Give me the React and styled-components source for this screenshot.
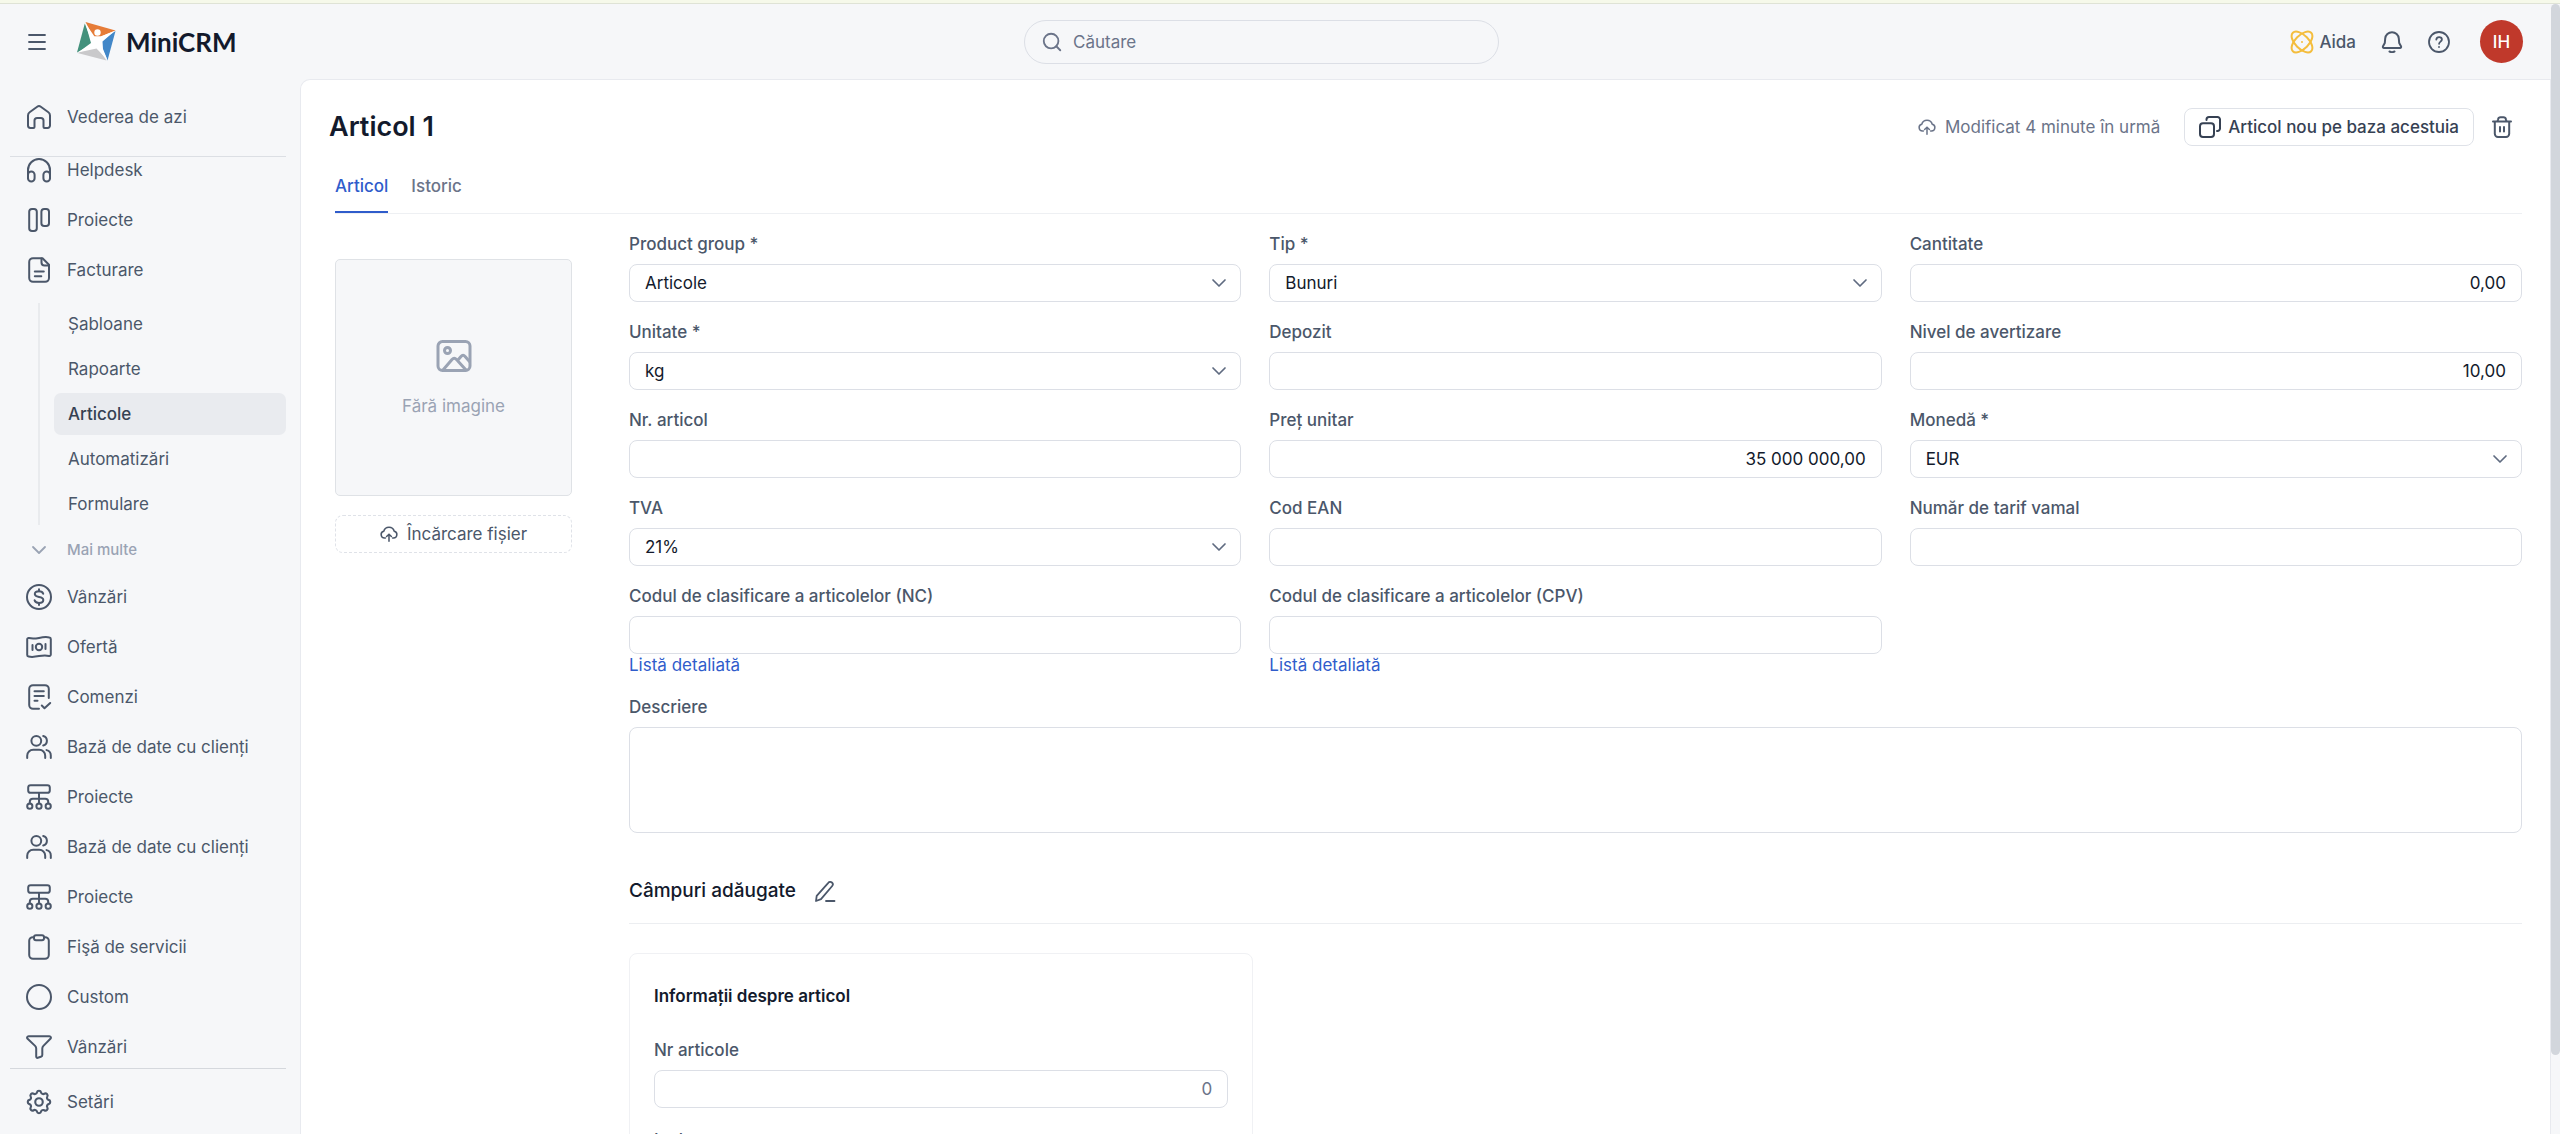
import React from "react"
import styled, { createGlobalStyle, css } from "styled-components"
import { ChevronDown, Menu, Search } from "lucide-react"
import { TbSettings } from "react-icons/tb"

const GlobalStyle = createGlobalStyle`
  * {
    box-sizing: border-box;
  }
  body {
    margin: 0;
    background: #f6f7f9;
    color: #4b576a;
    font-family: Inter, "Liberation Sans", sans-serif;
    font-size: 17px;
    line-height: 24px;
    overflow: hidden;
  }
  button, input, select, textarea {
    font: inherit;
    color: inherit;
  }
  h1, h2, h3 {
    margin: 0;
  }
  a {
    text-decoration: none;
  }
  svg {
    flex-shrink: 0;
  }
`

/* ---------- icons ---------- */

const Icon = ({ size = 26, box = 26, stroke = 2, children }) => (
  <svg
    width={size}
    height={size}
    viewBox={`0 0 ${box} ${box}`}
    fill="none"
    stroke="currentColor"
    strokeWidth={stroke}
    strokeLinecap="round"
    strokeLinejoin="round"
    aria-hidden="true"
  >
    {children}
  </svg>
)

const HomeIcon = () => (
  <Icon>
    <path d="M2 11.4c0-1.3.6-2.4 1.6-3.1l7.6-5.6c1.1-.8 2.5-.8 3.6 0l7.6 5.6c1 .7 1.6 1.8 1.6 3.1v10.2A2.4 2.4 0 0 1 21.6 24h-3.1a1 1 0 0 1-1-1v-6.5a2.6 2.6 0 0 0-2.6-2.6h-3.8a2.6 2.6 0 0 0-2.6 2.6V23a1 1 0 0 1-1 1H4.4A2.4 2.4 0 0 1 2 21.6z" />
  </Icon>
)

const HeadphonesIcon = () => (
  <Icon>
    <path d="M2 21v-8a11 11 0 0 1 22 0v8" />
    <rect x="2" y="14.5" width="6.6" height="10" rx="3.3" />
    <rect x="17.4" y="14.5" width="6.6" height="10" rx="3.3" />
  </Icon>
)

const BoardIcon = () => (
  <Icon>
    <rect x="3.2" y="2" width="7.6" height="22" rx="2.8" />
    <rect x="15.4" y="2" width="7.6" height="17" rx="2.8" />
  </Icon>
)

const FileIcon = () => (
  <Icon>
    <path d="M7 1.2h9.5L23 7.7V21a3.8 3.8 0 0 1-3.8 3.8H7A3.8 3.8 0 0 1 3.2 21V5A3.8 3.8 0 0 1 7 1.2z" />
    <path d="M15.5 1.5v4a3 3 0 0 0 3 3h4.2" />
    <path d="M8.8 14.5h9M8.8 19.3h6.5" />
  </Icon>
)

const DollarIcon = () => (
  <Icon>
    <circle cx="13" cy="13" r="12" />
    <path d="M17.2 9.7C16.7 8 15.2 7.2 13 7.2c-2.4 0-4.2 1-4.2 2.9 0 2 1.9 2.5 4.2 2.9s4.3 1 4.3 3-1.9 2.9-4.3 2.9c-2.3 0-4-.9-4.4-2.6" />
    <path d="M13 5.2v2M13 18.9v2" />
  </Icon>
)

const BanknoteIcon = () => (
  <Icon>
    <path d="M1.2 5.4c0-1 .8-1.5 1.7-1.3 4 .9 7.2.4 10.1-.2 3.4-.7 7-1.1 10.4-.5.9.1 1.4.7 1.4 1.5v15.700c0 1-.8 1.500-1.700 1.300-4-.9-7.200-.4-10.100.2-3.400.7-7 1.100-10.400.5-.9-.1-1.400-.7-1.400-1.500z" />
    <circle cx="13" cy="13" r="3.2" />
    <path d="M6.5 11v5M19.5 10v5" />
  </Icon>
)

const OrderIcon = () => (
  <Icon>
    <path d="M13 24.8H7A3.8 3.8 0 0 1 3.2 21V5A3.8 3.8 0 0 1 7 1.2h12A3.8 3.8 0 0 1 22.8 5v9" />
    <path d="M8.5 7.2h9.3M8.5 12h9.3M8.5 16.8h3M15.8 21.5l2.7 2.7 5.7-5.2" />
  </Icon>
)

const UsersIcon = () => (
  <Icon>
    <circle cx="10.3" cy="6.8" r="4.9" />
    <path d="M17.2 2a4.9 4.9 0 0 1 0 9.5" />
    <path d="M1.2 24v-2.2a6 6 0 0 1 6-6h6a6 6 0 0 1 6 6V24" />
    <path d="M20.5 16.1a5.6 5.6 0 0 1 4.3 5.5V24" />
  </Icon>
)

const NetworkIcon = () => (
  <Icon>
    <rect x="2.2" y="1.2" width="21.6" height="7.6" rx="2.4" />
    <path d="M13 9v10.5M3.8 19.5v-1.7a3 3 0 0 1 3-3h12.4a3 3 0 0 1 3 3v1.7" />
    <circle cx="3.8" cy="22.2" r="2.6" />
    <circle cx="13" cy="22.2" r="2.6" />
    <circle cx="22.2" cy="22.2" r="2.6" />
  </Icon>
)

const ClipboardIcon = () => (
  <Icon>
    <path d="M8 3.2H6.8A3.6 3.6 0 0 0 3.2 6.8V21A3.8 3.8 0 0 0 7 24.8h12a3.8 3.8 0 0 0 3.8-3.8V6.8a3.6 3.6 0 0 0-3.6-3.6H18" />
    <rect x="8" y="1.2" width="10" height="5" rx="2" />
  </Icon>
)

const CircleIcon = () => (
  <Icon>
    <circle cx="13" cy="13" r="12" />
  </Icon>
)

const FunnelIcon = () => (
  <Icon>
    <path d="M2.6 2.2h20.8c1.4 0 2 1.5 1 2.5l-7 7.2a3.8 3.8 0 0 0-1.1 2.7v6.3c0 .9-.5 1.6-1.4 1.9l-3.1 1c-.9.3-1.6-.3-1.6-1.2v-8a3.8 3.8 0 0 0-1.1-2.7l-7.5-7.2c-1-1-.4-2.5 1-2.5z" />
  </Icon>
)

const GearIcon = () => <TbSettings size={30} strokeWidth={1.7} />

const CloudUpIcon = ({ size }) => (
  <Icon size={size} box={20} stroke={1.7}>
    <path d="M6 14.5H5a3.8 3.8 0 0 1-.8-7.5 6 6 0 0 1 11.6 0 3.8 3.8 0 0 1-.8 7.5h-1" />
    <path d="M10 18V10.5M7.3 12.8 10 10.2l2.7 2.6" />
  </Icon>
)

const DuplicateIcon = () => (
  <Icon size={22} box={22}>
    <rect x="1" y="7.2" width="14" height="13.8" rx="3" />
    <path d="M7.5 4V3.5A2.5 2.5 0 0 1 10 1h8.5A2.5 2.5 0 0 1 21 3.5v9a2.5 2.5 0 0 1-2.5 2.5H18" />
  </Icon>
)

const TrashIcon = () => (
  <Icon size={22} box={22}>
    <path d="M2 5.5h18M6.5 5.2l.6-2A2.5 2.5 0 0 1 9.5 1.2h3a2.5 2.5 0 0 1 2.4 2l.6 2M3.8 5.8v12a3.2 3.2 0 0 0 3.2 3.2h8a3.2 3.2 0 0 0 3.2-3.2v-12M9 11v4.5M13 11v4.5" />
  </Icon>
)

const BellIcon = () => (
  <Icon size={22} box={22}>
    <path d="M11 1.2a6.8 6.8 0 0 0-6.8 6.3L3.8 12 2 15.3c-.5 1 .1 1.7 1 1.7h16c.9 0 1.5-.7 1-1.7L18.2 12l-.4-4.5A6.8 6.8 0 0 0 11 1.2z" />
    <path d="M8.5 20.5c1.5.8 3.5.8 5 0" />
  </Icon>
)

const HelpIcon = () => (
  <Icon size={22} box={22} stroke={1.8}>
    <circle cx="11" cy="11" r="10" />
    <path d="M8.3 8.6c.2-1.5 1.3-2.4 2.8-2.4 1.6 0 2.8 1 2.8 2.4 0 1.9-2.7 2.2-2.8 4.2M11 15.9v.1" />
  </Icon>
)

const PencilIcon = () => (
  <Icon size={22} box={22} stroke={1.8}>
    <path d="M14.3 2.8a2.5 2.5 0 0 1 3.6-.3 2.5 2.5 0 0 1 .3 3.5L7 19.2 2 21l.7-5.2zM12 21h8.5" />
  </Icon>
)

const ImageIcon = () => (
  <Icon size={36} box={36} stroke={3}>
    <rect x="2" y="3.5" width="32" height="29" rx="4.5" />
    <circle cx="11.5" cy="12.5" r="3" />
    <path d="M7 32l9-10.5c1.5-1.6 3-1.6 4.5 0L30 32M21.5 22.5l3.5-4c1.3-1.5 2.8-1.5 4.1-.1l4.4 5" />
  </Icon>
)

const AidaIcon = () => (
  <svg width="24" height="24" viewBox="0 0 24 24" fill="none" stroke="#f4bd3d" strokeWidth="2" aria-hidden="true">
    <ellipse cx="12" cy="12" rx="13" ry="6.8" transform="rotate(45 12 12)" />
    <ellipse cx="12" cy="12" rx="13" ry="6.8" transform="rotate(-45 12 12)" />
    <circle cx="12" cy="12" r="1" fill="#f4bd3d" stroke="none" />
  </svg>
)

const LogoMark = () => (
  <svg width="39" height="39" viewBox="0 0 39 39" aria-hidden="true">
    <path d="M8.5 0 38.5 8.5 24 14.5 16 14.5z" fill="#e67c38" />
    <path d="M7.8 1.5 13.5 16 14.5 22.5 0 30.5z" fill="#43917c" />
    <path d="M38.5 9 24.5 18.5 25 26 30.5 38.5z" fill="#4287c8" />
    <path d="M.5 31 16 24.5 19.5 24 29.5 38.5z" fill="#c9c9cb" />
    <path d="M8.5 1.5 17.5 14.5 23.5 14.5 38 8.8 25.5 19.5 26 27 30.5 38 19.5 26.5 1 30.5 14 21z" fill="#fff" />
    <circle cx="20.5" cy="10.5" r="3.2" fill="#fff" />
  </svg>
)

/* ---------- shell ---------- */

const Page = styled.div`
  height: 100vh;
  display: flex;
  flex-direction: column;
  border-top: 3px solid #f6f9ea;
`

const Body = styled.div`
  flex: 1;
  min-height: 0;
  display: flex;
  border-top: 1px solid #dfe3d6;
`

const AppArea = styled.div`
  flex: 1;
  min-width: 0;
  display: flex;
  flex-direction: column;
`

const ScrollTrack = styled.div`
  width: 9px;
`

const ScrollThumb = styled.div`
  height: 93%;
  border-radius: 5px;
  background: #d2d6dc;
`

const Header = styled.header`
  height: 75px;
  padding-right: 28px;
  display: grid;
  grid-template-columns: 1fr 475px 1fr;
  align-items: center;
`

const Brand = styled.div`
  display: flex;
  align-items: center;
  padding-left: 25px;
`

const BrandLink = styled.a`
  display: flex;
  align-items: center;
  gap: 10px;
  margin-left: 28px;
  color: #131a2c;
  font-family: Lato, sans-serif;
  font-size: 26px;
  font-weight: 700;
`

const IconButton = styled.button`
  display: flex;
  align-items: center;
  gap: 5px;
  padding: 0;
  border: 0;
  background: none;
  font-weight: 500;
`

const SearchBox = styled.label`
  height: 44px;
  display: flex;
  align-items: center;
  gap: 10px;
  padding: 0 16px;
  border: 1px solid #dcdfe6;
  border-radius: 22px;
  color: #6b7489;
`

const SearchInput = styled.input`
  flex: 1;
  min-width: 0;
  padding: 0;
  border: 0;
  outline: 0;
  background: none;
  &::placeholder {
    color: #6b7489;
    opacity: 1;
  }
`

const HeaderTools = styled.div`
  display: flex;
  justify-content: flex-end;
  align-items: center;
  gap: 25px;
`

const Avatar = styled.button`
  width: 43px;
  height: 43px;
  margin-left: 5px;
  padding: 0;
  border: 0;
  border-radius: 50%;
  background: #c0392b;
  color: #fff;
  font-weight: 500;
`

const Columns = styled.div`
  flex: 1;
  min-height: 0;
  display: flex;
`

/* ---------- sidebar ---------- */

const Sidebar = styled.nav`
  width: 300px;
  padding: 0 14px 0 10px;
  display: flex;
  flex-direction: column;
`

const NavTop = styled.div`
  padding: 13px 0 14px;
  border-bottom: 1px solid #dcdfe4;
`

const NavScroll = styled.div`
  flex: 1;
  min-height: 0;
  overflow: hidden;
`

const NavList = styled.div`
  margin-top: -12px;
`

const NavBottom = styled.div`
  padding: 8px 0 7px;
  border-top: 1px solid #d5d8dd;
`

const NavLink = styled.a`
  height: 50px;
  display: flex;
  align-items: center;
  gap: 15px;
  padding-left: 16px;
  color: #4b576a;
`

const NavIcon = styled.span`
  width: 26px;
  display: flex;
  justify-content: center;
`

const SubNav = styled.div`
  margin: 8px 0 0 28px;
  padding-left: 14px;
  border-left: 2px solid #e9ebee;
`

const SubLink = styled.a`
  height: 42px;
  margin-bottom: 3px;
  display: flex;
  align-items: center;
  padding-left: 14px;
  border-radius: 7px;
  color: #4b576a;
  ${({ $active }) =>
    $active &&
    css`
      background: #e9ebef;
      color: #364153;
      font-weight: 500;
    `}
`

const MoreButton = styled.button`
  height: 44px;
  display: flex;
  align-items: center;
  gap: 16px;
  padding: 0 0 0 17px;
  border: 0;
  background: none;
  color: #9aa3b4;
  font-size: 15px;
  font-weight: 500;
`

/* ---------- article ---------- */

const Main = styled.main`
  flex: 1;
  min-width: 0;
  padding: 24px 28px 0;
  border: 1px solid #e8eaef;
  border-width: 1px 1px 0 1px;
  border-radius: 10px 0 0 0;
  background: #fff;
  overflow: hidden;
`

const TitleRow = styled.div`
  display: flex;
  align-items: center;
  height: 46px;
`

const Title = styled.h1`
  flex: 1;
  color: #131a2c;
  font-size: 27px;
  font-weight: 600;
`

const SavedNote = styled.span`
  display: flex;
  align-items: center;
  gap: 9px;
  margin-right: 24px;
  color: #6b7489;
`

const CopyButton = styled.button`
  height: 38px;
  display: flex;
  align-items: center;
  gap: 7px;
  margin-right: 17px;
  padding: 0 14px;
  border: 1px solid #dfe2e8;
  border-radius: 8px;
  background: #fff;
  color: #364153;
  font-weight: 500;
`

const DeleteButton = styled(IconButton)`
  margin-right: 9px;
`

const Tabs = styled.div`
  display: flex;
  gap: 23px;
  margin-left: 6px;
  padding-top: 15px;
  border-bottom: 1px solid #eef0f3;
`

const Tab = styled.button`
  height: 48px;
  padding: 0 0 4px;
  border: 0;
  border-bottom: 2px solid ${({ $active }) => ($active ? "#2f5ccb" : "transparent")};
  background: none;
  color: ${({ $active }) => ($active ? "#2f5ccb" : "#6b7489")};
  font-weight: 500;
`

const Content = styled.div`
  display: flex;
  gap: 57px;
  margin-left: 6px;
  padding-top: 18px;
`

const MediaColumn = styled.div`
  width: 237px;
  flex-shrink: 0;
  padding-top: 27px;
`

const ImageBox = styled.div`
  aspect-ratio: 1;
  display: flex;
  flex-direction: column;
  align-items: center;
  justify-content: center;
  gap: 20px;
  border: 1px solid #dfe2e6;
  border-radius: 5px;
  background: #f6f7f9;
  color: #9aa3b4;
`

const UploadButton = styled.button`
  width: 100%;
  height: 38px;
  display: flex;
  align-items: center;
  justify-content: center;
  gap: 9px;
  margin-top: 19px;
  padding: 0;
  border: 1px dashed #dfe2e8;
  border-radius: 8px;
  background: #fff;
`

const FormColumn = styled.form`
  flex: 1;
  min-width: 0;
`

const FieldGrid = styled.div`
  display: grid;
  grid-template-columns: repeat(3, 1fr);
  gap: 18px 28px;
`

const FieldBox = styled.div`
  grid-column: ${({ $wide }) => ($wide ? "1 / -1" : "auto")};
  margin-bottom: ${({ $spaced }) => ($spaced ? "20px" : "0")};
`

const Label = styled.label`
  display: block;
  margin-bottom: 8px;
  font-weight: 500;
`

const control = css`
  display: block;
  width: 100%;
  padding: 0 15px;
  border: 1px solid #dcdfe6;
  border-radius: 8px;
  background: #fff;
  color: #131a2c;
`

const TextInput = styled.input`
  ${control}
  height: 38px;
  text-align: ${({ $numeric }) => ($numeric ? "right" : "left")};
  &::placeholder {
    color: #6b7489;
    opacity: 1;
  }
`

const TextArea = styled.textarea`
  ${control}
  height: 106px;
  resize: none;
`

const SelectWrap = styled.div`
  position: relative;
  svg {
    position: absolute;
    right: 10px;
    top: 7px;
    color: #5f6b80;
    pointer-events: none;
  }
`

const SelectInput = styled.select`
  ${control}
  height: 38px;
  appearance: none;
`

const FieldLink = styled.a`
  display: block;
  width: fit-content;
  color: #2f5ccb;
  line-height: 23px;
`

const SectionHead = styled.div`
  display: flex;
  align-items: center;
  gap: 18px;
  margin-top: 40px;
  padding: 6px 0 20px;
  border-bottom: 1px solid #eceef1;
`

const SectionTitle = styled.h2`
  color: #131a2c;
  font-size: 19px;
  font-weight: 500;
`

const Cards = styled.div`
  display: grid;
  grid-template-columns: repeat(3, 1fr);
  gap: 10px;
  margin-top: 29px;
`

const Card = styled.section`
  padding: 30px 24px;
  border: 1px solid #f0f1f4;
  border-radius: 8px;
`

const CardTitle = styled.h3`
  margin-bottom: 30px;
  color: #131a2c;
  font-size: 17px;
  font-weight: 600;
  line-height: 24px;
`

const projects = [
  { icon: HeadphonesIcon, label: "Helpdesk" },
  { icon: BoardIcon, label: "Proiecte" },
  { icon: FileIcon, label: "Facturare" },
]

const subItems = ["Șabloane", "Rapoarte", "Articole", "Automatizări", "Formulare"]

const modules = [
  { icon: DollarIcon, label: "Vânzări" },
  { icon: BanknoteIcon, label: "Ofertă" },
  { icon: OrderIcon, label: "Comenzi" },
  { icon: UsersIcon, label: "Bază de date cu clienți" },
  { icon: NetworkIcon, label: "Proiecte" },
  { icon: UsersIcon, label: "Bază de date cu clienți" },
  { icon: NetworkIcon, label: "Proiecte" },
  { icon: ClipboardIcon, label: "Fişă de servicii" },
  { icon: CircleIcon, label: "Custom" },
  { icon: FunnelIcon, label: "Vânzări" },
]

const fields = [
  { id: "group", label: "Product group *", type: "select", value: "Articole" },
  { id: "type", label: "Tip *", type: "select", value: "Bunuri" },
  { id: "quantity", label: "Cantitate", numeric: true, value: "0,00" },
  { id: "unit", label: "Unitate *", type: "select", value: "kg" },
  { id: "warehouse", label: "Depozit" },
  { id: "warning", label: "Nivel de avertizare", numeric: true, value: "10,00" },
  { id: "number", label: "Nr. articol" },
  { id: "price", label: "Preț unitar", numeric: true, value: "35 000 000,00" },
  { id: "currency", label: "Monedă *", type: "select", value: "EUR" },
  { id: "vat", label: "TVA", type: "select", value: "21%" },
  { id: "ean", label: "Cod EAN" },
  { id: "tariff", label: "Număr de tarif vamal" },
  { id: "nc", label: "Codul de clasificare a articolelor (NC)", link: "Listă detaliată" },
  { id: "cpv", label: "Codul de clasificare a articolelor (CPV)", link: "Listă detaliată" },
]

const Field = ({ id, label, type, value = "", numeric, placeholder, link, spaced }) => (
  <FieldBox $spaced={spaced}>
    <Label htmlFor={id}>{label}</Label>
    {type === "select" ? (
      <SelectWrap>
        <SelectInput id={id} defaultValue={value}>
          <option>{value}</option>
        </SelectInput>
        <ChevronDown size={24} strokeWidth={1.7} />
      </SelectWrap>
    ) : (
      <TextInput id={id} type="text" defaultValue={value} placeholder={placeholder} $numeric={numeric} />
    )}
    {link && <FieldLink href="#">{link}</FieldLink>}
  </FieldBox>
)

const NavItems = ({ items }) =>
  items.map(({ icon: ItemIcon, label }, i) => (
    <NavLink href="#" key={i}>
      <NavIcon>
        <ItemIcon />
      </NavIcon>
      {label}
    </NavLink>
  ))

const App = () => {
  return (
    <Page>
      <GlobalStyle />
      <Body>
        <AppArea>
          <Header>
            <Brand>
              <IconButton type="button" aria-label="Meniu">
                <Menu size={24} strokeWidth={1.8} />
              </IconButton>
              <BrandLink href="#">
                <LogoMark />
                MiniCRM
              </BrandLink>
            </Brand>
            <SearchBox>
              <Search size={22} strokeWidth={2} />
              <SearchInput type="search" placeholder="Căutare" aria-label="Căutare" />
            </SearchBox>
            <HeaderTools>
              <IconButton type="button">
                <AidaIcon />
                Aida
              </IconButton>
              <IconButton type="button" aria-label="Notificări">
                <BellIcon />
              </IconButton>
              <IconButton type="button" aria-label="Ajutor">
                <HelpIcon />
              </IconButton>
              <Avatar type="button">IH</Avatar>
            </HeaderTools>
          </Header>
          <Columns>
            <Sidebar>
              <NavTop>
                <NavItems items={[{ icon: HomeIcon, label: "Vederea de azi" }]} />
              </NavTop>
              <NavScroll>
                <NavList>
                  <NavItems items={projects} />
                  <SubNav>
                    {subItems.map(item => (
                      <SubLink href="#" key={item} $active={item === "Articole"}>
                        {item}
                      </SubLink>
                    ))}
                  </SubNav>
                  <MoreButton type="button">
                    <ChevronDown size={24} strokeWidth={1.8} />
                    Mai multe
                  </MoreButton>
                  <NavItems items={modules} />
                </NavList>
              </NavScroll>
              <NavBottom>
                <NavItems items={[{ icon: GearIcon, label: "Setări" }]} />
              </NavBottom>
            </Sidebar>
            <Main>
              <TitleRow>
                <Title>Articol 1</Title>
                <SavedNote>
                  <CloudUpIcon size={18} />
                  Modificat 4 minute în urmă
                </SavedNote>
                <CopyButton type="button">
                  <DuplicateIcon />
                  Articol nou pe baza acestuia
                </CopyButton>
                <DeleteButton type="button" aria-label="Șterge">
                  <TrashIcon />
                </DeleteButton>
              </TitleRow>
              <Tabs>
                <Tab type="button" $active>
                  Articol
                </Tab>
                <Tab type="button">Istoric</Tab>
              </Tabs>
              <Content>
                <MediaColumn>
                  <ImageBox>
                    <ImageIcon />
                    Fără imagine
                  </ImageBox>
                  <UploadButton type="button">
                    <CloudUpIcon size={18} />
                    Încărcare fișier
                  </UploadButton>
                </MediaColumn>
                <FormColumn>
                  <FieldGrid>
                    {fields.map(field => (
                      <Field key={field.id} {...field} />
                    ))}
                    <FieldBox $wide>
                      <Label htmlFor="description">Descriere</Label>
                      <TextArea id="description" />
                    </FieldBox>
                  </FieldGrid>
                  <SectionHead>
                    <SectionTitle>Câmpuri adăugate</SectionTitle>
                    <IconButton type="button" aria-label="Editează câmpurile">
                      <PencilIcon />
                    </IconButton>
                  </SectionHead>
                  <Cards>
                    <Card>
                      <CardTitle>Informații despre articol</CardTitle>
                      <Field id="items" label="Nr articole" placeholder="0" numeric spaced />
                      <Field id="included" label="Inclus" />
                    </Card>
                  </Cards>
                </FormColumn>
              </Content>
            </Main>
          </Columns>
        </AppArea>
        <ScrollTrack>
          <ScrollThumb />
        </ScrollTrack>
      </Body>
    </Page>
  )
}

export default App
